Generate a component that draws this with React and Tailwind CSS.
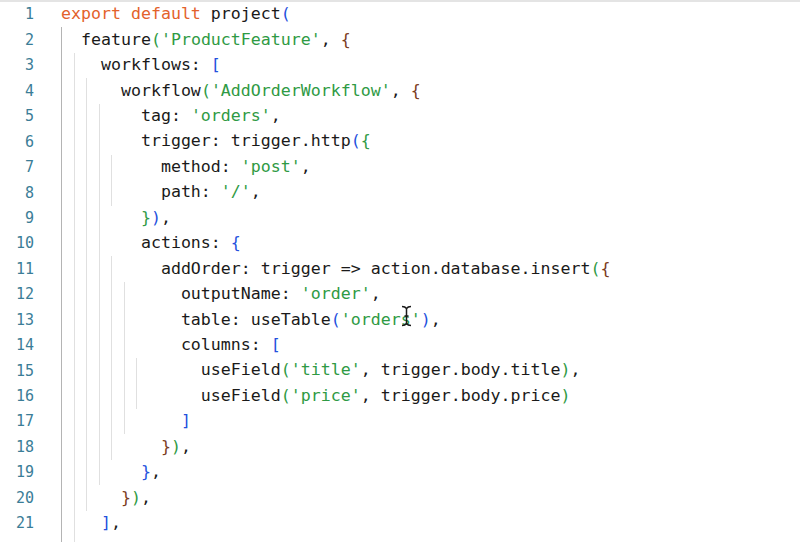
import React from 'react';

// colours of the editor theme
const C = {
  kw: 'text-[#e3622b]',
  str: 'text-[#2f9a44]',
  blue: 'text-[#2451dd]',
  green: 'text-[#2f9a44]',
  brown: 'text-[#7b3b1c]',
};

// each line: list of [text, colourKey]
const lines = [
  [['export default', 'kw'], [' project'], ['(', 'blue']],
  [['  feature'], ['(', 'green'], ["'ProductFeature'", 'str'], [', '], ['{', 'brown']],
  [['    workflows: '], ['[', 'blue']],
  [['      workflow'], ['(', 'green'], ["'AddOrderWorkflow'", 'str'], [', '], ['{', 'brown']],
  [['        tag: '], ["'orders'", 'str'], [',']],
  [['        trigger: trigger.http'], ['(', 'blue'], ['{', 'green']],
  [['          method: '], ["'post'", 'str'], [',']],
  [['          path: '], ["'/'", 'str'], [',']],
  [['        '], ['}', 'green'], [')', 'blue'], [',']],
  [['        actions: '], ['{', 'blue']],
  [['          addOrder: trigger => action.database.insert'], ['(', 'green'], ['{', 'brown']],
  [['            outputName: '], ["'order'", 'str'], [',']],
  [['            table: useTable'], ['(', 'blue'], ["'orders'", 'str'], [')', 'blue'], [',']],
  [['            columns: '], ['[', 'blue']],
  [['              useField'], ['(', 'green'], ["'title'", 'str'], [', trigger.body.title'], [')', 'green'], [',']],
  [['              useField'], ['(', 'green'], ["'price'", 'str'], [', trigger.body.price'], [')', 'green']],
  [['            '], [']', 'blue']],
  [['          '], ['}', 'brown'], [')', 'green'], [',']],
  [['        '], ['}', 'blue'], [',']],
  [['      '], ['}', 'brown'], [')', 'green'], [',']],
  [['    '], [']', 'blue'], [',']],
];

// indent guides: left offset, first line, last line
const guides = [
  { x: 'left-[61px]', from: 2, to: 99, dark: true },
  { x: 'left-[74px]', from: 3, to: 99 },
  { x: 'left-[86px]', from: 4, to: 20 },
  { x: 'left-[99px]', from: 5, to: 19 },
  { x: 'left-[111px]', from: 7, to: 8 },
  { x: 'left-[111px]', from: 11, to: 18 },
  { x: 'left-[124px]', from: 12, to: 17 },
  { x: 'left-[136px]', from: 15, to: 16 },
];

function Guides({ n }) {
  return guides
    .filter(g => n >= g.from && n <= g.to)
    .map((g, i) => (
      <span
        key={i}
        className={`absolute top-0 bottom-0 w-px ${g.x} ${g.dark ? 'bg-[#b4b4b4]' : 'bg-[#e0e0e0]'}`}
      />
    ));
}

function Row({ n, tokens }) {
  return (
    <div className="relative flex h-[25.45px] shrink-0 items-center">
      <Guides n={n} />
      <span className="w-[34px] text-right text-[15px] text-[#3b7d97]">{n}</span>
      <span className="ml-[27px] whitespace-pre text-[16.6px] text-[#1a1a1a]">
        {tokens.map(([t, c], i) => (
          <span key={i} className={c ? C[c] : ''}>{t}</span>
        ))}
      </span>
    </div>
  );
}

export default function App() {
  return (
    <div className="relative flex h-[542px] w-[800px] flex-col overflow-hidden border-t-2 border-[#e4e4e4] bg-white font-['DejaVu_Sans_Mono',monospace]">
      {lines.map((tokens, i) => (
        <Row key={i} n={i + 1} tokens={tokens} />
      ))}
      <div className="relative flex-1">
        <Guides n={22} />
      </div>
      {/* mouse text cursor */}
      <svg className="absolute left-[400px] top-[303px]" width="13" height="22" viewBox="0 0 13 22">
        <path d="M2 1.5c2 0 3.5.5 4.5 2c1-1.5 2.5-2 4.5-2M6.5 3.5v15M2 20.5c2 0 3.5-.5 4.5-2c1 1.5 2.5 2 4.5 2M4.5 11h4" fill="none" stroke="#1a1a1a" strokeWidth="1.5" />
      </svg>
    </div>
  );
}
